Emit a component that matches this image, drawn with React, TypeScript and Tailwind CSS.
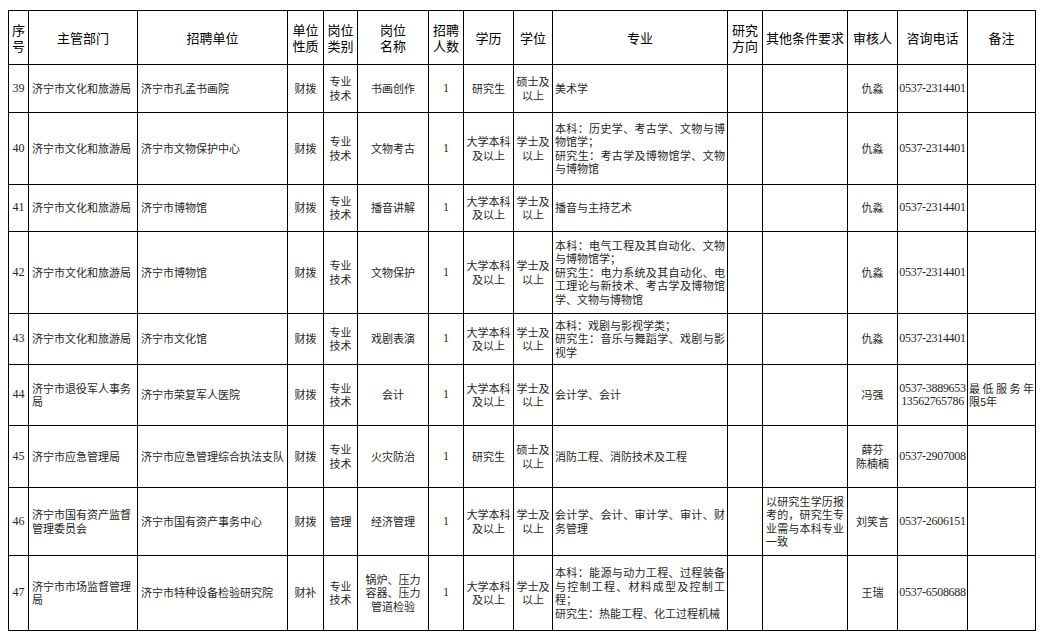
import React from 'react';

// 列宽（像素）
const cols = [20, 109, 150, 36, 34, 71, 35, 50, 39, 175, 35, 85, 50, 70, 68];

const headers: string[][] = [
  ['序', '号'],
  ['主管部门'],
  ['招聘单位'],
  ['单位', '性质'],
  ['岗位', '类别'],
  ['岗位', '名称'],
  ['招聘', '人数'],
  ['学历'],
  ['学位'],
  ['专业'],
  ['研究', '方向'],
  ['其他条件要求'],
  ['审核人'],
  ['咨询电话'],
  ['备注'],
];

type Row = {
  no: string;
  h: number;
  dept: string[];
  unit: string;
  nature: string;
  kind: string[];
  post: string[];
  count: string;
  edu: string[];
  degree: string[];
  major: string[];
  other?: string[];
  reviewer: string[];
  phone: string[];
  note?: string[];
};

const tech = ['专业', '技术'];
const bachelor = ['大学本科', '及以上'];
const bDeg = ['学士及', '以上'];
const mDeg = ['硕士及', '以上'];
const culture = ['济宁市文化和旅游局'];

const rows: Row[] = [
  { no: '39', h: 48, dept: culture, unit: '济宁市孔孟书画院', nature: '财拨', kind: tech, post: ['书画创作'], count: '1', edu: ['研究生'], degree: mDeg, major: ['美术学'], reviewer: ['仇淼'], phone: ['0537-2314401'] },
  { no: '40', h: 72, dept: culture, unit: '济宁市文物保护中心', nature: '财拨', kind: tech, post: ['文物考古'], count: '1', edu: bachelor, degree: bDeg, major: ['本科：历史学、考古学、文物与博|', '物馆学；', '研究生：考古学及博物馆学、文物|', '与博物馆'], reviewer: ['仇淼'], phone: ['0537-2314401'] },
  { no: '41', h: 47, dept: culture, unit: '济宁市博物馆', nature: '财拨', kind: tech, post: ['播音讲解'], count: '1', edu: bachelor, degree: bDeg, major: ['播音与主持艺术'], reviewer: ['仇淼'], phone: ['0537-2314401'] },
  { no: '42', h: 82, dept: culture, unit: '济宁市博物馆', nature: '财拨', kind: tech, post: ['文物保护'], count: '1', edu: bachelor, degree: bDeg, major: ['本科：电气工程及其自动化、文物|', '与博物馆学；', '研究生：电力系统及其自动化、电|', '工理论与新技术、考古学及博物馆|', '学、文物与博物馆'], reviewer: ['仇淼'], phone: ['0537-2314401'] },
  { no: '43', h: 51, dept: culture, unit: '济宁市文化馆', nature: '财拨', kind: tech, post: ['戏剧表演'], count: '1', edu: bachelor, degree: bDeg, major: ['本科：戏剧与影视学类；', '研究生：音乐与舞蹈学、戏剧与影|', '视学'], reviewer: ['仇淼'], phone: ['0537-2314401'] },
  { no: '44', h: 61, dept: ['济宁市退役军人事务', '局'], unit: '济宁市荣复军人医院', nature: '财拨', kind: tech, post: ['会计'], count: '1', edu: bachelor, degree: bDeg, major: ['会计学、会计'], reviewer: ['冯强'], phone: ['0537-3889653', '13562765786'], note: ['最低服务年|', '限5年'] },
  { no: '45', h: 62, dept: ['济宁市应急管理局'], unit: '济宁市应急管理综合执法支队', nature: '财拨', kind: tech, post: ['火灾防治'], count: '1', edu: ['研究生'], degree: mDeg, major: ['消防工程、消防技术及工程'], reviewer: ['薛芬', '陈楠楠'], phone: ['0537-2907008'] },
  { no: '46', h: 68, dept: ['济宁市国有资产监督', '管理委员会'], unit: '济宁市国有资产事务中心', nature: '财拨', kind: ['管理'], post: ['经济管理'], count: '1', edu: bachelor, degree: bDeg, major: ['会计学、会计、审计学、审计、财|', '务管理'], other: ['以研究生学历报|', '考的，研究生专|', '业需与本科专业|', '一致'], reviewer: ['刘笑言'], phone: ['0537-2606151'] },
  { no: '47', h: 75, dept: ['济宁市市场监督管理', '局'], unit: '济宁市特种设备检验研究院', nature: '财补', kind: tech, post: ['锅炉、压力', '容器、压力', '管道检验'], count: '1', edu: bachelor, degree: bDeg, major: ['本科：能源与动力工程、过程装备|', '与控制工程、材料成型及控制工|', '程；', '研究生：热能工程、化工过程机械'], reviewer: ['王瑞'], phone: ['0537-6508688'] },
];

// 以“|”结尾的行两端对齐
const Lines = ({ lines, justify }: { lines: string[]; justify?: boolean }) => (
  <>
    {lines.map((l, i) => {
      const full = l.endsWith('|');
      return (
        <div
          key={i}
          className={`whitespace-nowrap ${justify && full ? 'text-justify [text-align-last:justify]' : ''}`}
        >
          {full ? l.slice(0, -1) : l}
        </div>
      );
    })}
  </>
);

const cjk = "font-['Noto_Sans_CJK_SC','Noto_Sans',sans-serif]";
const serif = "font-['Liberation_Serif','Noto_Sans_CJK_SC',serif]";
const cell = 'border border-black align-middle p-0';

export default function App() {
  return (
    <div className="bg-white w-[1045px] h-[638px] pt-[10px] pl-[8px]">
      <table className={`table-fixed border-collapse ${cjk}`} style={{ width: 1027 }}>
        <colgroup>
          {cols.map((w, i) => (
            <col key={i} style={{ width: w }} />
          ))}
        </colgroup>
        <thead>
          <tr className="h-[54px]">
            {headers.map((h, i) => (
              <th key={i} className={`${cell} text-center font-normal text-[13px] leading-[16px] text-black`}>
                {h.map((t, j) => (
                  <div key={j} className="whitespace-nowrap">{t}</div>
                ))}
              </th>
            ))}
          </tr>
        </thead>
        <tbody className="text-[11px] leading-[13.5px] text-[#262626]">
          {rows.map((r) => (
            <tr key={r.no} style={{ height: r.h }}>
              <td className={`${cell} ${serif} text-[12px] text-center`}>{r.no}</td>
              <td className={`${cell} px-[3px] text-left`}>
                <Lines lines={r.dept} />
              </td>
              <td className={`${cell} px-[3px] text-left`}>{r.unit}</td>
              <td className={`${cell} text-center`}>{r.nature}</td>
              <td className={`${cell} text-center`}>
                <Lines lines={r.kind} />
              </td>
              <td className={`${cell} text-center`}>
                <Lines lines={r.post} />
              </td>
              <td className={`${cell} ${serif} text-[12px] text-center`}>{r.count}</td>
              <td className={`${cell} text-center`}>
                <Lines lines={r.edu} />
              </td>
              <td className={`${cell} text-center`}>
                <Lines lines={r.degree} />
              </td>
              <td className={`${cell} px-[2px] text-left`}>
                <Lines lines={r.major} justify />
              </td>
              <td className={cell}></td>
              <td className={`${cell} px-[3px] text-left`}>
                {r.other && <Lines lines={r.other} justify />}
              </td>
              <td className={`${cell} text-center`}>
                <Lines lines={r.reviewer} />
              </td>
              <td className={`${cell} ${serif} text-[12px] text-center tracking-[-0.3px]`}>
                <Lines lines={r.phone} />
              </td>
              <td className={`${cell} px-[1px] text-left`}>
                {r.note && <Lines lines={r.note} justify />}
              </td>
            </tr>
          ))}
        </tbody>
      </table>
    </div>
  );
}
